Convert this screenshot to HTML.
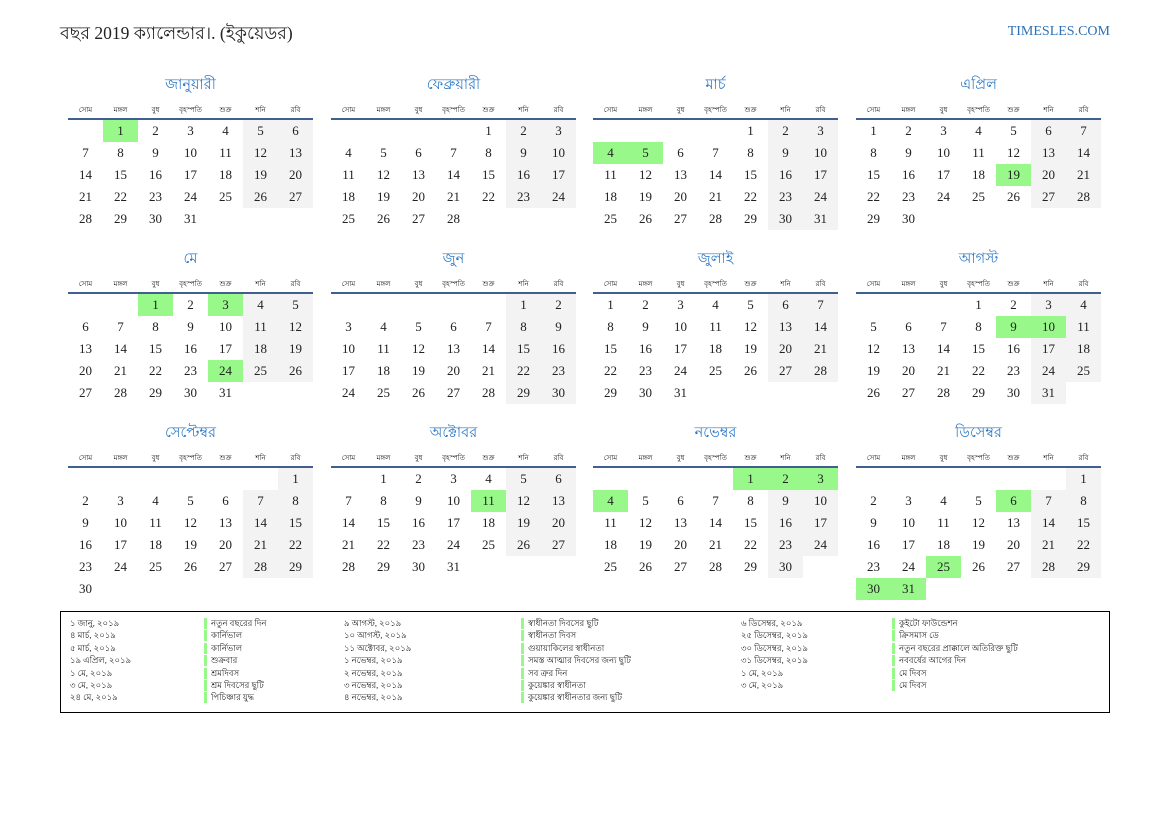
<!DOCTYPE html>
<html><head><meta charset="utf-8">
<style>
body{margin:0;width:1169px;height:827px;background:#fff;position:relative;overflow:hidden;font-family:"Liberation Serif","Noto Serif CJK SC",serif;color:#222}
.abs{position:absolute}
.hdr{left:60px;top:21px;font-size:17.5px;white-space:nowrap}
.site{right:59px;top:24px;font-size:14px;color:#2e6fb5}
.title{font-size:14.5px;color:#2e78c4;text-align:center;width:245px}
.wd{font-size:7px;width:35px;text-align:center;color:#111}
.line{height:2px;background:#3f5f8f;width:245px}
.c{width:35px;height:22px;line-height:22px;text-align:center;font-size:13px}
.g{background:#f3f3f3}
.h{background:#98f98a}
.legend{left:60px;top:611px;width:1048px;height:100px;border:1px solid #000}
.lt{font-size:8.5px;line-height:12.4px;white-space:nowrap}
.bar{width:3px;height:11px;background:#98f98a}
</style></head><body>
<div class="abs hdr">বছর 2019 ক্যালেন্ডার।. (ইকুয়েডর)</div>
<div class="abs site">TIMESLES.COM</div>
<div id="cal"></div>
<div class="abs legend"></div>
<div id="leg"></div>
<script>
var names=["জানুয়ারী","ফেব্রুয়ারী","মার্চ","এপ্রিল","মে","জুন","জুলাই","আগস্ট","সেপ্টেম্বর","অক্টোবর","নভেম্বর","ডিসেম্বর"];
var offs=[1,4,4,0,2,5,0,3,6,1,4,6];
var lens=[31,28,31,30,31,30,31,31,30,31,30,31];
var wds=["সোম","মঙ্গল","বুধ","বৃহস্পতি","শুক্র","শনি","রবি"];
var hol={0:[1],2:[4,5],3:[19],4:[1,3,24],7:[9,10],9:[11],10:[1,2,3,4],11:[6,25,30,31]};
var xs=[68,331,593,856],ys=[120,294,468];
var h="";
for(var m=0;m<12;m++){
 var x=xs[m%4],y=ys[Math.floor(m/4)];
 h+='<div class="abs title" style="left:'+x+'px;top:'+(y-46)+'px">'+names[m]+'</div>';
 for(var i=0;i<7;i++)h+='<div class="abs wd" style="left:'+(x+i*35)+'px;top:'+(y-16)+'px">'+wds[i]+'</div>';
 h+='<div class="abs line" style="left:'+x+'px;top:'+(y-2)+'px"></div>';
 for(var d=1;d<=lens[m];d++){
  var p=offs[m]+d-1,col=p%7,row=Math.floor(p/7);
  var cls="c";
  if(hol[m]&&hol[m].indexOf(d)>=0)cls+=" h";else if(col>=5)cls+=" g";
  h+='<div class="abs '+cls+'" style="left:'+(x+col*35)+'px;top:'+(y+row*22)+'px">'+d+'</div>';
 }
}
document.getElementById("cal").innerHTML=h;
var L=[
[70,204,["১ জানু, ২০১৯","৪ মার্চ, ২০১৯","৫ মার্চ, ২০১৯","১৯ এপ্রিল, ২০১৯","১ মে, ২০১৯","৩ মে, ২০১৯","২৪ মে, ২০১৯"],["নতুন বছরের দিন","কার্নিভাল","কার্নিভাল","শুক্রবার","শ্রমদিবস","শ্রম দিবসের ছুটি","পিচিঞ্চার যুদ্ধ"]],
[344,521,["৯ আগস্ট, ২০১৯","১০ আগস্ট, ২০১৯","১১ অক্টোবর, ২০১৯","১ নভেম্বর, ২০১৯","২ নভেম্বর, ২০১৯","৩ নভেম্বর, ২০১৯","৪ নভেম্বর, ২০১৯"],["স্বাধীনতা দিবসের ছুটি","স্বাধীনতা দিবস","গুয়ায়াকিলের স্বাধীনতা","সমস্ত আত্মার দিবসের জন্য ছুটি","সব ত্রুর দিন","কুয়েঙ্কার স্বাধীনতা","কুয়েঙ্কার স্বাধীনতার জন্য ছুটি"]],
[741,892,["৬ ডিসেম্বর, ২০১৯","২৫ ডিসেম্বর, ২০১৯","৩০ ডিসেম্বর, ২০১৯","৩১ ডিসেম্বর, ২০১৯","১ মে, ২০১৯","৩ মে, ২০১৯"],["কুইটো ফাউন্ডেশন","ক্রিসমাস ডে","নতুন বছরের প্রাক্কালে অতিরিক্ত ছুটি","নববর্ষের আগের দিন","মে দিবস","মে দিবস"]]];
var g="";
L.forEach(function(c){c[2].forEach(function(t,i){var y=617+i*12.4;
 g+='<div class="abs lt" style="left:'+c[0]+'px;top:'+y+'px">'+t+'</div>';
 g+='<div class="abs bar" style="left:'+c[1]+'px;top:'+(y+1)+'px"></div>';
 g+='<div class="abs lt" style="left:'+(c[1]+7)+'px;top:'+y+'px">'+c[3][i]+'</div>';});});
document.getElementById("leg").innerHTML=g;
</script>
</body></html>
